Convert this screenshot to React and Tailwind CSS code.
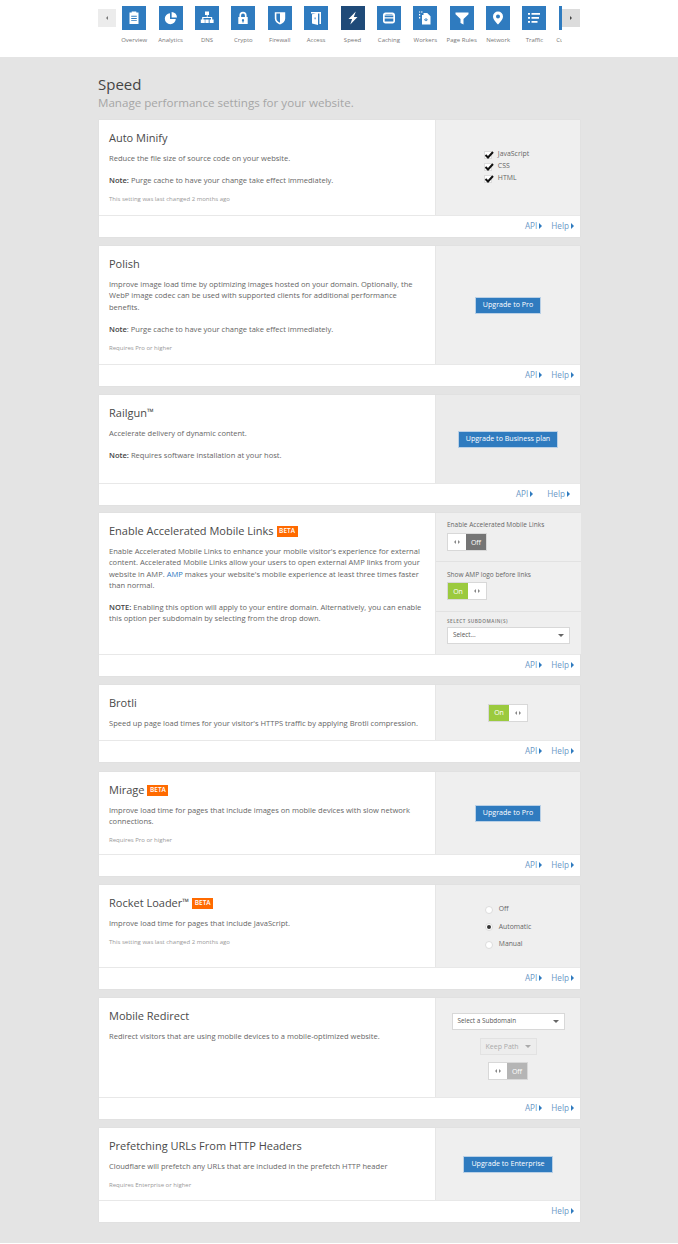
import React from "react";

const I = ({ children }) => (
  <svg viewBox="0 0 24 24" className="w-[24px] h-[24px]" fill="#fff">{children}</svg>
);

const nav = [
  ["Overview", <I><path fillRule="evenodd" d="M7.5 6.500h2.200V5.600h4.600v.9h2.200v11.600h-9zM9.200 9.800v.9h5.600v-.9zM9.200 12v.9h5.600V12zM9.200 14.200v.9h5.600v-.9z" /></I>],
  ["Analytics", <I><path d="M11 7.200a5.500 5.500 0 1 0 5.800 5.800H11z" /><path d="M12.600 6v5.400H18A5.500 5.500 0 0 0 12.600 6z" /></I>],
  ["DNS", <I><path d="M10 5.500h4v3.400h-1.400v2h4.600v2.600h1.400V17h-4v-3.500h1.400v-1.400H8.400v1.400h1.400V17h-4v-3.500h1.400v-2.600h4.600v-2H10zM10.300 13.500h3.400V17h-3.400z" /></I>],
  ["Crypto", <I><path fillRule="evenodd" d="M8.400 11V9.400a3.600 3.600 0 0 1 7.200 0V11h1.100v7H7.300v-7zm1.700 0h3.800V9.400a1.900 1.900 0 0 0-3.800 0zM12 13a1.200 1.200 0 0 0-.6 2.200v1.300h1.200v-1.300A1.200 1.200 0 0 0 12 13z" /></I>],
  ["Firewall", <I><path fillRule="evenodd" d="M6.800 6.200h10.400v6.200c0 3-2.400 5-5.200 6-2.800-1-5.200-3-5.200-6zM8.400 7.600v4.800c0 2 1.600 3.500 3.600 4.400V7.600z" /></I>],
  ["Access", <I><path fillRule="evenodd" d="M7 6h10v12h-1.600V7.500H14V19l-6-1.600V8.200L11.800 7.500H7zm3.600 5.600v1.600h1v-1.600z" /></I>],
  ["Speed", <I><path d="M14.800 5.500 7.500 13h3.600l-1.800 5.500 7.200-7.600h-3.700z" /></I>],
  ["Caching", <I><path fillRule="evenodd" d="M8.500 6.500h7c1.400 0 2.500 1 2.500 2.400v6.200c0 1.400-1.100 2.400-2.500 2.400h-7C7.100 17.500 6 16.500 6 15.100V8.900C6 7.500 7.100 6.500 8.500 6.500zM7.700 9.500v1.700h8.600V9.500zM7.700 12.500v3h8.600v-3zM8.500 8h7v.6h-7z" /></I>],
  ["Workers", <I><path d="M6 5.500h1.200v1H6zM8 5.500h1.500v1H8zM6 8h1.200v1.500H6zM6 11h1.200v1.500H6z" /><path fillRule="evenodd" d="M10.500 7h3.700l3.300 3.300V18.500H9V9H10.500zm.6 6.800 1.500 1.500.6-.5-1-1 1-1-.6-.5zm3.700 0-1.500-1.500-.6.5 1 1-1 1 .6.5z" /></I>],
  ["Page Rules", <I><path d="M5.500 6.500h13v1.800l-5 4.700v5.500l-3-1.600V13l-5-4.700z" /></I>],
  ["Network", <I><path fillRule="evenodd" d="M12 5.500a5 5 0 0 1 5 5c0 3-3 5.800-5 8-2-2.200-5-5-5-8a5 5 0 0 1 5-5zm0 3a2 2 0 1 0 0 4 2 2 0 0 0 0-4z" /></I>],
  ["Traffic", <I><path d="M6 7h2v1.800H6zM9.500 7H18v1.800H9.500zM6 11h2v1.800H6zM9.500 11H17v1.800H9.500zM6 15h2v1.800H6zM9.500 15h6v1.800h-6z" /></I>],
  ["Customize", <I></I>],
];

const Tri = () => (
  <span className="inline-block ml-[2px] w-0 h-0 border-y-[3px] border-y-transparent border-l-[3px] border-l-[#2f7bbf]" />
);

const Beta = () => (
  <span className="ml-[3px] inline-flex items-center justify-center w-[21px] h-[11px] bg-[#ff6a00] text-white text-[6.5px] font-semibold leading-none">BETA</span>
);

const Btn = ({ children }) => (
  <button className="block bg-[#2f7bbf] border border-[#b9d0e6] text-white text-[7.100px] h-[17px] px-[7px] leading-none whitespace-nowrap">
    {children}
  </button>
);

const Arrows = () => (
  <span className="flex-1 flex items-center justify-center gap-[2px]">
    <span className="w-0 h-0 border-y-[2px] border-y-transparent border-r-[2px] border-r-[#888]" />
    <span className="w-0 h-0 border-y-[2px] border-y-transparent border-l-[2px] border-l-[#888]" />
  </span>
);

const Toggle = ({ on, dim }) => (
  <div className="flex w-[40px] h-[18px] border border-[#d8d8d8] bg-white text-[7px] leading-none">
    {on && <span className="w-[20px] bg-[#9bca3e] text-white flex items-center justify-center">On</span>}
    <Arrows />
    {!on && <span className={`w-[20px] text-white flex items-center justify-center ${dim ? "bg-[#b5b5b5]" : "bg-[#757575]"}`}>Off</span>}
  </div>
);

const Select = ({ w, label, disabled }) => (
  <div className={`flex items-center justify-between h-[17px] px-[5px] border leading-none ${w} ${disabled ? "bg-[#ededed] border-[#e2e2e2] text-[#aaa] text-[7px]" : "bg-white border-[#d8d8d8] text-[#555] text-[6.400px]"}`}>
    <span>{label}</span>
    <span className={`w-0 h-0 border-x-[3px] border-x-transparent border-t-[3px] ${disabled ? "border-t-[#aaa]" : "border-t-[#666]"}`} />
  </div>
);

const Radio = ({ label, on }) => (
  <div className="flex items-center gap-[6px] h-[17.500px]">
    <span className="w-[8px] h-[8px] rounded-full bg-white border border-[#dcdcdc] flex items-center justify-center">
      {on && <span className="w-[4px] h-[4px] rounded-full bg-[#333]" />}
    </span>
    <span className="text-[6.800px] leading-none text-[#666]">{label}</span>
  </div>
);

const Check = ({ label }) => (
  <div className="flex items-center gap-[6px] h-[12px]">
    <span className="relative w-[8px] h-[8px] bg-white border border-[#dcdcdc]">
      <svg viewBox="0 0 10 10" className="absolute -top-[2px] -left-[1px] w-[10px] h-[10px]" fill="none" stroke="#111" strokeWidth="2">
        <path d="M1.500 5 4 7.500 9 2" />
      </svg>
    </span>
    <span className="text-[6.900px] leading-none text-[#666]">{label}</span>
  </div>
);

const Card = ({ h, mt, title, beta, tm, children, control, api = true, shift, dark, side }) => (
  <section className={`bg-white w-[481px] shadow-[0_0_0_0.5px_#dedede] ${mt}`}>
    <div className={`flex ${h}`}>
      <div className="w-[337px] px-[10px] pt-[11px] border-r border-[#e6e6e6] shrink-0">
        <h2 className="flex items-center text-[11px] leading-[14px] text-[#4a4a4a] whitespace-nowrap h-[14px]">
          {title}{tm && <span className="text-[9px] relative top-[-1px]">™</span>}{beta && <Beta />}
        </h2>
        <div className="mt-[8px] text-[7.550px] leading-[11.300px] text-[#666]">{children}</div>
      </div>
      <div className={`flex-1 ${dark ? "bg-[#ebebeb]" : "bg-[#efefef]"} ${side || "flex items-center justify-center"}`}>{control}</div>
    </div>
    <div className={`h-[22px] border-t border-[#e8e8e8] flex items-center justify-end text-[8.200px] text-[#6b97c6] leading-none ${shift ? "pr-[10px] gap-[14px]" : "pr-[6px] gap-[9px]"}`}>
      {api && <span className="flex items-center">API<Tri /></span>}
      <span className="flex items-center">Help<Tri /></span>
    </div>
  </section>
);

const Small = ({ children }) => (
  <p className="mt-[8.500px] text-[6px] leading-[8px] text-[#999]">{children}</p>
);

const Para = ({ children }) => <p className="mt-[11px]">{children}</p>;
const B = ({ children }) => <b className="font-semibold text-[#444]">{children}</b>;

export default function App() {
  return (
    <div className="w-[678px] h-[1243px] bg-[#e4e4e4] overflow-hidden font-['Open_Sans',sans-serif]">
      <header className="h-[57px] bg-white">
        <div className="relative w-[482px] ml-[98px] flex pl-[18px] pt-[6px]">
          <button className="absolute left-0 top-[9px] w-[18px] h-[18px] bg-[#ececec] flex items-center justify-center">
            <span className="w-0 h-0 border-y-[2px] border-y-transparent border-r-[2px] border-r-[#777]" />
          </button>
          <nav className="flex w-[446px] overflow-hidden">
            {nav.map(([label, icon]) => (
              <div key={label} className="w-[36.400px] shrink-0 flex flex-col items-center">
                <div className={`w-[24px] h-[24px] shrink-0 ${label === "Speed" ? "bg-[#1f4a78]" : "bg-[#2f7bbf]"}`}>{icon}</div>
                <span className="mt-[6px] text-[6px] leading-[8px] text-[#777] whitespace-nowrap">{label}</span>
              </div>
            ))}
          </nav>
          <button className="absolute right-0 top-[9px] w-[18px] h-[18px] bg-[#dcdcdc] flex items-center justify-center">
            <span className="w-0 h-0 border-y-[2px] border-y-transparent border-l-[2px] border-l-[#444]" />
          </button>
        </div>
      </header>

      <main className="w-[481px] ml-[99px]">
        <h1 className="mt-[18px] text-[15px] leading-[18px] text-[#444] -ml-[1px]">Speed</h1>
        <p className="mt-[2px] text-[11.600px] leading-[16px] text-[#a6a6a6] -ml-[1px]">Manage performance settings for your website.</p>

        <div className="mt-[9px] flex flex-col">
          <Card h="h-[95px]" title="Auto Minify" control={
            <div className="flex flex-col ml-[-3px] mt-[-2px]">
              <Check label="JavaScript" />
              <Check label="CSS" />
              <Check label="HTML" />
            </div>
          }>
            <p>Reduce the file size of source code on your website.</p>
            <Para><B>Note:</B> Purge cache to have your change take effect immediately.</Para>
            <Small>This setting was last changed 2 months ago</Small>
          </Card>

          <Card mt="mt-[9px]" h="h-[118px]" title="Polish" control={<Btn>Upgrade to Pro</Btn>}>
            <p>Improve image load time by optimizing images hosted on your domain. Optionally, the WebP image codec can be used with supported clients for additional performance benefits.</p>
            <Para><B>Note</B>: Purge cache to have your change take effect immediately.</Para>
            <Small>Requires Pro or higher</Small>
          </Card>

          <Card mt="mt-[9px]" h="h-[88px]" title="Railgun" tm dark shift control={<Btn>Upgrade to Business plan</Btn>}>
            <p>Accelerate delivery of dynamic content.</p>
            <Para><B>Note:</B> Requires software installation at your host.</Para>
          </Card>

          <Card mt="mt-[8px]" h="h-[141px]" title="Enable Accelerated Mobile Links" beta side="flex flex-col" control={
            <>
              <div className="h-[49px] px-[11px] pt-[7px] border-b border-[#e2e2e2]">
                <div className="text-[6.500px] leading-[10px] text-[#666]">Enable Accelerated Mobile Links</div>
                <div className="mt-[3px]"><Toggle /></div>
              </div>
              <div className="h-[50px] px-[11px] pt-[8px] border-b border-[#e2e2e2]">
                <div className="text-[6.500px] leading-[10px] text-[#666]">Show AMP logo before links</div>
                <div className="mt-[2px]"><Toggle on /></div>
              </div>
              <div className="px-[11px] pt-[6px]">
                <div className="text-[4.700px] leading-[7px] tracking-[0.5px] font-semibold text-[#777]">SELECT SUBDOMAIN(S)</div>
                <div className="mt-[2px]"><Select w="w-[123px]" label="Select..." /></div>
              </div>
            </>
          }>
            <p>Enable Accelerated Mobile Links to enhance your mobile visitor's experience for external content. Accelerated Mobile Links allow your users to open external AMP links from your website in AMP. <span className="text-[#2f7bbf]">AMP</span> makes your website's mobile experience at least three times faster than normal.</p>
            <Para><B>NOTE:</B> Enabling this option will apply to your entire domain. Alternatively, you can enable this option per subdomain by selecting from the drop down.</Para>
          </Card>

          <Card mt="mt-[9px]" h="h-[55px]" title="Brotli" control={<Toggle on />}>
            <p>Speed up page load times for your visitor's HTTPS traffic by applying Brotli compression.</p>
          </Card>

          <Card mt="mt-[10px]" h="h-[82px]" title="Mirage" beta control={<Btn>Upgrade to Pro</Btn>}>
            <p>Improve load time for pages that include images on mobile devices with slow network connections.</p>
            <Small>Requires Pro or higher</Small>
          </Card>

          <Card mt="mt-[9px]" h="h-[82px]" title="Rocket Loader" tm beta side="flex justify-center pt-[16px]" control={
            <div className="flex flex-col">
              <Radio label="Off" />
              <Radio label="Automatic" on />
              <Radio label="Manual" />
            </div>
          }>
            <p>Improve load time for pages that include JavaScript.</p>
            <Small>This setting was last changed 2 months ago</Small>
          </Card>

          <Card mt="mt-[9px]" h="h-[99px]" title="Mobile Redirect" side="flex flex-col items-center pt-[15px]" control={
            <>
              <Select w="w-[113px]" label="Select a Subdomain" />
              <div className="mt-[8px]"><Select w="w-[57px]" label="Keep Path" disabled /></div>
              <div className="mt-[7px]"><Toggle dim /></div>
            </>
          }>
            <p>Redirect visitors that are using mobile devices to a mobile-optimized website.</p>
          </Card>

          <Card mt="mt-[9px]" h="h-[72px]" title="Prefetching URLs From HTTP Headers" api={false} control={<Btn>Upgrade to Enterprise</Btn>}>
            <p>Cloudflare will prefetch any URLs that are included in the prefetch HTTP header</p>
            <Small>Requires Enterprise or higher</Small>
          </Card>
        </div>
      </main>
    </div>
  );
}
